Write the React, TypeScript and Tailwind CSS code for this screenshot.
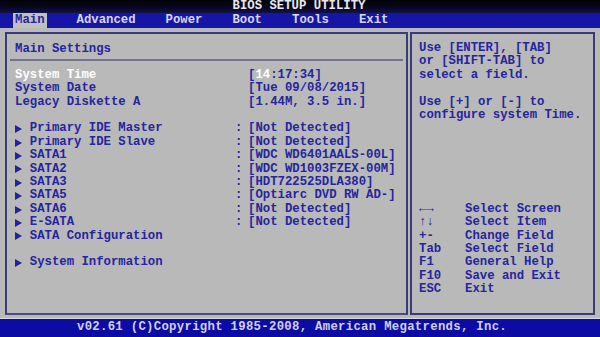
import React from "react";

const font = { fontFamily: '"Liberation Mono", "DejaVu Sans Mono", monospace' };

function Tri() {
  return (
    <span className="inline-flex w-[14.8px] items-center">
      <svg width="7" height="8" viewBox="0 0 7 8">
        <path d="M0 0 L7 4 L0 8 Z" fill="#23239a" />
      </svg>
    </span>
  );
}

type Row = { arrow?: boolean; label: string; colon?: boolean; value?: React.ReactNode; hl?: boolean };

const rows: (Row | null)[] = [
  { label: "System Time", hl: true, value: (<>[<span className="text-white">14</span>:17:34]</>) },
  { label: "System Date", value: "[Tue 09/08/2015]" },
  { label: "Legacy Diskette A", value: "[1.44M, 3.5 in.]" },
  null,
  { arrow: true, label: "Primary IDE Master", colon: true, value: "[Not Detected]" },
  { arrow: true, label: "Primary IDE Slave", colon: true, value: "[Not Detected]" },
  { arrow: true, label: "SATA1", colon: true, value: "[WDC WD6401AALS-00L]" },
  { arrow: true, label: "SATA2", colon: true, value: "[WDC WD1003FZEX-00M]" },
  { arrow: true, label: "SATA3", colon: true, value: "[HDT722525DLA380]" },
  { arrow: true, label: "SATA5", colon: true, value: "[Optiarc DVD RW AD-]" },
  { arrow: true, label: "SATA6", colon: true, value: "[Not Detected]" },
  { arrow: true, label: "E-SATA", colon: true, value: "[Not Detected]" },
  { arrow: true, label: "SATA Configuration" },
  null,
  { arrow: true, label: "System Information" },
];

const legend: [string, string][] = [
  ["\u2190\u2192", "Select Screen"],
  ["\u2191\u2193", "Select Item"],
  ["+-", "Change Field"],
  ["Tab", "Select Field"],
  ["F1", "General Help"],
  ["F10", "Save and Exit"],
  ["ESC", "Exit"],
];

export default function App() {
  return (
    <div
      className="flex h-[337px] w-[600px] flex-col overflow-hidden bg-[#b9b9b9] text-[12.3px] font-bold leading-[13.4px] text-[#25259e]"
      style={font}
    >
      {/* title */}
      <div className="flex h-[13px] items-center justify-center bg-gradient-to-b from-[#020208] via-[#06061c] to-[#12124a] text-[#e8e8f0]">
        <span className="ml-[-2px]">BIOS SETUP UTILITY</span>
      </div>
      {/* menu */}
      <div className="flex h-[15px] items-stretch gap-[30px] bg-[#1616a6] pl-[13px] text-[#d6d6f4]">
        <span className="flex items-center bg-[#c0c0c0] px-[2px] pt-[1px] text-[#25259e]">Main</span>
        <span className="flex items-center pt-[1px]">Advanced</span>
        <span className="flex items-center pt-[1px]">Power</span>
        <span className="flex items-center pt-[1px]">Boot</span>
        <span className="flex items-center pt-[1px]">Tools</span>
        <span className="flex items-center pt-[1px]">Exit</span>
      </div>
      {/* body */}
      <div className="flex flex-1 gap-[2px] px-[5px] pb-[3px] pt-[4px]">
        <div className="flex w-[403px] flex-col border-2 border-[#3b3b78] border-b-[#4a4a80] pt-[9px]">
          <div className="pl-[8px]">Main Settings</div>
          <div className="mx-[3px] mt-[3px] h-[2px] bg-[#55557a] opacity-70" />
          <div className="mt-[7.5px] flex flex-col pl-[8px]">
            {rows.map((r, i) =>
              r === null ? (
                <div key={i} className="h-[13.4px]" />
              ) : (
                <div key={i} className="flex h-[13.4px] items-center whitespace-pre">
                  <span className={"flex w-[220px] items-center " + (r.hl ? "text-white" : "")}>
                    {r.arrow && <Tri />}
                    {r.label}
                  </span>
                  <span className="w-[13px]">{r.colon ? ":" : ""}</span>
                  <span>{r.value}</span>
                </div>
              )
            )}
          </div>
        </div>
        <div className="flex flex-1 flex-col border-2 border-[#3b3b78] pl-[7px] pt-[8px]">
          <div className="whitespace-pre">
            <div className="h-[13.4px]">Use [ENTER], [TAB]</div>
            <div className="h-[13.4px]">or [SHIFT-TAB] to</div>
            <div className="h-[13.4px]">select a field.</div>
            <div className="h-[13.4px]" />
            <div className="h-[13.4px]">Use [+] or [-] to</div>
            <div className="h-[13.4px]">configure system Time.</div>
          </div>
          <div className="mt-[80.4px] flex flex-col">
            {legend.map(([k, d]) => (
              <div key={d} className="flex h-[13.4px] items-center whitespace-pre">
                <span className="w-[46px]">{k}</span>
                <span>{d}</span>
              </div>
            ))}
          </div>
        </div>
      </div>
      {/* footer */}
      <div className="flex h-[19px] items-center justify-center border-t border-[#d8d8e0] bg-[#0c0ca4] pr-[16px] text-[#d0d0ec]">
        <span className="tracking-[0.3px]">v02.61 (C)Copyright 1985-2008, American Megatrends, Inc.</span>
      </div>
    </div>
  );
}
